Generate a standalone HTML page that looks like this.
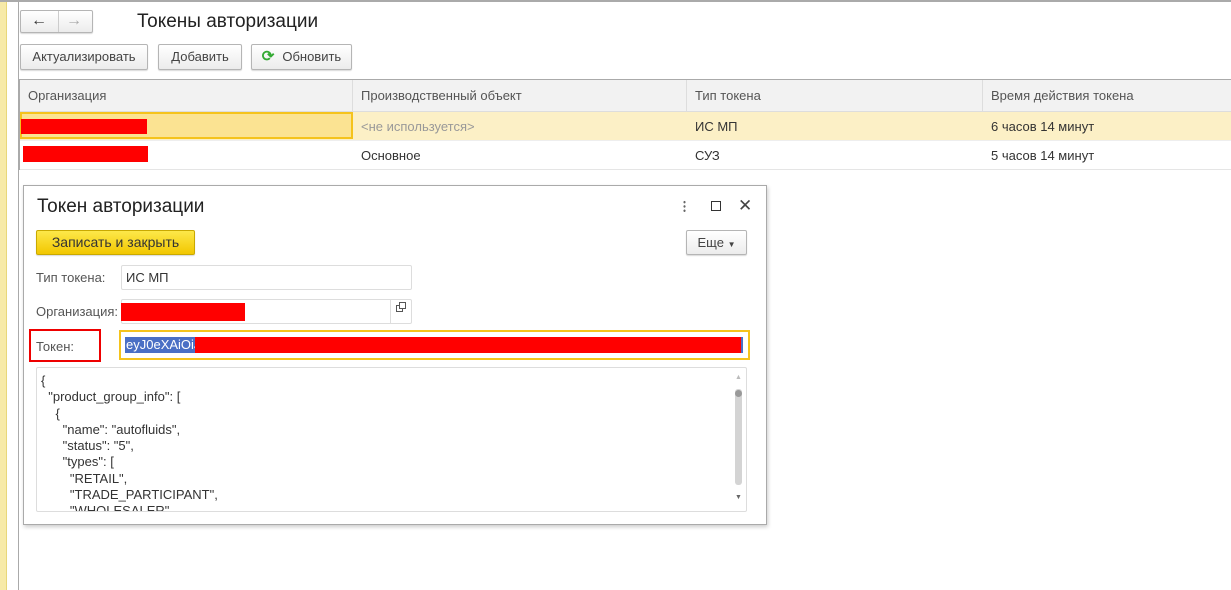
<!DOCTYPE html>
<html><head><meta charset="utf-8"><style>
*{box-sizing:border-box}
body{margin:0;width:1231px;height:590px;background:#fff;font-family:"Liberation Sans",Arial,sans-serif;font-size:12px;color:#333;position:relative;overflow:hidden}
.a{position:absolute}
.btn{position:absolute;border:1px solid #b5b5b5;border-radius:2px;background:linear-gradient(#fff,#ececec);box-shadow:0 1px 1px rgba(0,0,0,.15);text-align:center;font-size:13px;color:#444;line-height:23px}
.th{position:absolute;top:80px;height:31px;background:#f2f2f2;border-right:1px solid #ddd;line-height:31px;padding-left:8px;font-size:13px;color:#555}
.td{position:absolute;line-height:29px;padding-left:8px;font-size:13px;color:#333}
.inp{position:absolute;border:1px solid #ddd;border-radius:2px;background:#fff}
</style></head><body>
<div class="a" style="left:0;top:0;width:7px;height:590px;background:#f7eaa8;border-right:1px solid #e8d77a"></div>
<div class="a" style="left:18px;top:0;width:1px;height:590px;background:#aaa"></div>
<div class="a" style="left:0;top:0;width:1231px;height:2px;background:#aaa"></div>
<div class="btn" style="left:20px;top:10px;width:73px;height:23px;font-size:16px;line-height:20px"><span style="position:absolute;left:10px;color:#333">&#8592;</span><span style="position:absolute;left:37px;top:0;width:1px;height:21px;background:#ccc"></span><span style="position:absolute;left:45px;color:#aaa">&#8594;</span></div>
<div class="a" style="left:137px;top:11px;font-size:19px;color:#222">Токены авторизации</div>
<div class="btn" style="left:20px;top:44px;width:128px;height:26px">Актуализировать</div>
<div class="btn" style="left:158px;top:44px;width:84px;height:26px">Добавить</div>
<div class="btn" style="left:251px;top:44px;width:101px;height:26px"><span style="color:#3a3;font-weight:bold;font-size:15px;margin-right:8px">&#10227;</span>Обновить</div>
<div class="a" style="left:19px;top:79px;width:1212px;height:91px;border-top:1px solid #aaa;border-left:1px solid #aaa"></div>
<div class="th" style="left:20px;width:333px">Организация</div>
<div class="th" style="left:353px;width:334px">Производственный объект</div>
<div class="th" style="left:687px;width:296px">Тип токена</div>
<div class="th" style="left:983px;width:248px;border:0">Время действия токена</div>
<div class="a" style="left:20px;top:111px;width:1211px;height:1px;background:#ddd"></div>
<div class="a" style="left:20px;top:112px;width:1211px;height:28px;background:#fcf0c6"></div>
<div class="a" style="left:20px;top:112px;width:333px;height:27px;background:#fbe392;border:2px solid #f5c31c"></div>
<div class="a" style="left:21px;top:119px;width:126px;height:15px;background:#f00"></div>
<div class="td" style="left:353px;top:112px;color:#999">&lt;не используется&gt;</div>
<div class="td" style="left:687px;top:112px">ИС МП</div>
<div class="td" style="left:983px;top:112px">6 часов 14 минут</div>
<div class="a" style="left:20px;top:140px;width:1211px;height:1px;background:#eee"></div>
<div class="a" style="left:23px;top:146px;width:125px;height:16px;background:#f00"></div>
<div class="td" style="left:353px;top:141px">Основное</div>
<div class="td" style="left:687px;top:141px">СУЗ</div>
<div class="td" style="left:983px;top:141px">5 часов 14 минут</div>
<div class="a" style="left:20px;top:169px;width:1211px;height:1px;background:#e5e5e5"></div>
<!-- dialog -->
<div class="a" style="left:23px;top:185px;width:744px;height:340px;background:#fff;border:1px solid #aaa;box-shadow:1px 2px 4px rgba(0,0,0,.2)"></div>
<div class="a" style="left:37px;top:196px;font-size:19px;color:#222">Токен авторизации</div>
<div class="a" style="left:683px;top:200px;width:3px;height:13px;background:radial-gradient(circle,#666 1px,transparent 1.3px) 0 0/3px 4.3px"></div>
<div class="a" style="left:711px;top:201px;width:10px;height:10px;border:1px solid #333"></div>
<div class="a" style="left:738px;top:196px;font-size:17px;color:#444">&#10005;</div>
<div class="btn" style="left:36px;top:230px;width:159px;height:25px;background:linear-gradient(#fde84a,#f2c700);border-color:#c9a900;color:#333;font-size:14px">Записать и закрыть</div>
<div class="btn" style="left:686px;top:230px;width:61px;height:25px">Еще <span style="font-size:8px">&#9660;</span></div>
<div class="a" style="left:36px;top:270px;font-size:13px;color:#555">Тип токена:</div>
<div class="inp" style="left:121px;top:265px;width:291px;height:25px;padding:4px 4px;font-size:13px">ИС МП</div>
<div class="a" style="left:36px;top:304px;font-size:13px;color:#555">Организация:</div>
<div class="inp" style="left:121px;top:299px;width:291px;height:25px"></div>
<div class="a" style="left:390px;top:300px;width:1px;height:23px;background:#ddd"></div>
<div class="a" style="left:396px;top:305px;width:7px;height:7px;border:1px solid #555"></div>
<div class="a" style="left:399px;top:302px;width:7px;height:7px;border:1px solid #555;background:#fff"></div>
<div class="a" style="left:121px;top:303px;width:124px;height:18px;background:#f00"></div>
<div class="a" style="left:29px;top:329px;width:72px;height:33px;border:2px solid #e00"></div>
<div class="a" style="left:36px;top:339px;font-size:13px;color:#555">Токен:</div>
<div class="a" style="left:119px;top:330px;width:631px;height:30px;border:2px solid #f5c31c"></div>
<div class="a" style="left:125px;top:337px;width:618px;height:16px;background:#4a6fc5"></div>
<div class="a" style="left:126px;top:338px;font-size:13px;color:#fff;line-height:14px">eyJ0eXAiOiJ</div>
<div class="a" style="left:195px;top:337px;width:546px;height:16px;background:#f00"></div>
<div class="inp" style="left:36px;top:367px;width:711px;height:145px;overflow:hidden;padding:5px 4px;font-size:13px;line-height:16.3px;white-space:pre;color:#333">{
  "product_group_info": [
    {
      "name": "autofluids",
      "status": "5",
      "types": [
        "RETAIL",
        "TRADE_PARTICIPANT",
        "WHOLESALER"</div>
<div class="a" style="left:735px;top:389px;width:7px;height:96px;background:#d4d4d4;border-radius:3px"></div>
<div class="a" style="left:735px;top:390px;width:7px;height:7px;background:#999;border-radius:50%"></div>
<div class="a" style="left:735px;top:374px;font-size:7px;color:#bbb">&#9650;</div>
<div class="a" style="left:735px;top:494px;font-size:7px;color:#666">&#9660;</div>
</body></html>
